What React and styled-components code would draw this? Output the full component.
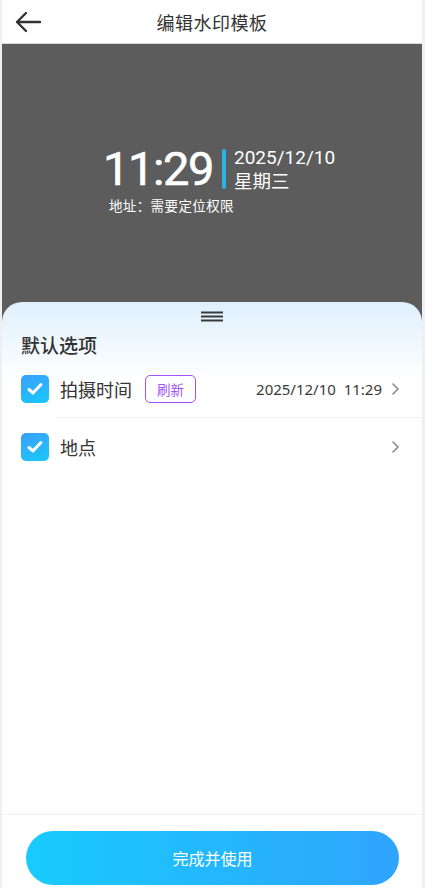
import React from "react";
import styled, { createGlobalStyle } from "styled-components";

const Global = createGlobalStyle`
  html, body { margin: 0; padding: 0; background: #efefef; }
  body { font-family: "Noto Sans CJK SC", "Noto Sans", sans-serif; }
  * { box-sizing: border-box; }
`;

const Frame = styled.div`
  width: 420px;
  height: 888px;
  margin-left: 2px;
  background: #ffffff;
  display: flex;
  flex-direction: column;
  overflow: hidden;
`;

const Header = styled.header`
  height: 44px;
  flex: none;
  display: flex;
  align-items: center;
  justify-content: center;
  position: relative;
  border-bottom: 1px solid #d8d8d8;
  background: #fff;
`;

const BackBtn = styled.button`
  position: absolute;
  left: 10px;
  top: 8px;
  width: 32px;
  height: 28px;
  padding: 0;
  border: 0;
  background: transparent;
  display: flex;
  align-items: center;
  justify-content: center;
`;

const Title = styled.h1`
  margin: 0;
  font-size: 18px;
  font-weight: 400;
  color: #333;
  letter-spacing: 0.5px;
`;

const Preview = styled.div`
  height: 278px;
  flex: none;
  background: #5c5c5c;
  display: flex;
  justify-content: center;
  padding-top: 102px;
  padding-left: 14px;
`;

const Watermark = styled.div`
  display: flex;
  flex-direction: column;
  color: #fff;
`;

const WmTop = styled.div`
  display: flex;
  align-items: center;
`;

const BigTime = styled.div`
  font-family: Roboto, sans-serif;
  font-size: 47px;
  font-weight: 400;
  line-height: 40px;
  letter-spacing: -1.4px;
  -webkit-text-stroke: 0.6px #fff;
`;

const Bar = styled.div`
  width: 4px;
  height: 40px;
  border-radius: 2px;
  background: #2ab4e6;
  margin: 0 8px 0 9px;
`;

const DateCol = styled.div`
  display: flex;
  flex-direction: column;
  font-size: 18.5px;
`;

const DateLine = styled.div`
  font-family: ${(p) => (p.$latin ? "Roboto, sans-serif" : "inherit")};
  font-size: ${(p) => (p.$latin ? "19px" : "18.5px")};
  line-height: 23px;
  height: 23px;
`;

const Address = styled.div`
  font-size: 13.5px;
  margin-top: 5px;
  margin-left: 6px;
  letter-spacing: 0.4px;
  line-height: 16px;
`;

const Sheet = styled.div`
  flex: 1;
  margin-top: -20px;
  border-radius: 20px 20px 0 0;
  background: linear-gradient(180deg, #dff0fd 0px, #ffffff 80px);
  display: flex;
  flex-direction: column;
`;

const Grip = styled.div`
  display: flex;
  justify-content: center;
  padding-top: 9px;
  height: 22px;
`;

const SectionTitle = styled.div`
  font-size: 19px;
  font-weight: 500;
  color: #333;
  padding: 7px 0 0 19px;
  line-height: 28px;
`;

const RowWrap = styled.div`
  border-bottom: ${(p) => (p.$divider ? "1px solid #eeeeee" : "none")};
  margin-left: 54px;
  margin-top: ${(p) => p.$mt || 0}px;
`;

const RowInner = styled.div`
  margin-left: -54px;
  display: flex;
  align-items: center;
  height: ${(p) => p.$h}px;
  padding: 0 22px 0 19px;
`;

const Check = styled.div`
  width: 28px;
  height: 28px;
  border-radius: 5px;
  background: linear-gradient(160deg, #3aa0fb, #19c8fc);
  display: flex;
  align-items: center;
  justify-content: center;
  flex: none;
`;

const Label = styled.div`
  font-size: 18px;
  color: #333;
  margin-left: 11px;
`;

const Badge = styled.div`
  margin-left: 13px;
  height: 28px;
  padding: 0 11px;
  border: 1.5px solid #a052f5;
  border-radius: 5px;
  color: #a052f5;
  font-size: 13.5px;
  display: flex;
  align-items: center;
`;

const Value = styled.div`
  margin-left: auto;
  font-family: "Noto Sans", sans-serif;
  font-size: 15px;
  color: #3a3a3a;
  white-space: pre;
`;

const Chevron = styled.div`
  margin-left: ${(p) => (p.$auto ? "auto" : "9px")};
  display: flex;
  align-items: center;
`;

const Spacer = styled.div`
  flex: 1;
`;

const Footer = styled.div`
  flex: none;
  height: 74px;
  border-top: 1px solid #f3f3f3;
  box-shadow: 0 -2px 4px rgba(0,0,0,0.015);
  display: flex;
  justify-content: center;
  padding-top: 16px;
`;

const PrimaryBtn = styled.button`
  width: 373px;
  height: 54px;
  border: 0;
  border-radius: 27px;
  background: linear-gradient(90deg, #18cbfd 0%, #2fa4fd 100%);
  color: #fff;
  font-family: "Noto Sans CJK SC", sans-serif;
  font-size: 16px;
  margin-left: 1px;
`;

const CheckIcon = () => (
  <svg width="20" height="20" viewBox="0 0 20 20">
    <path d="M4 10.5 L8 14 L16 5.5" fill="none" stroke="#fff" strokeWidth="3" strokeLinecap="round" strokeLinejoin="round" />
  </svg>
);

const ChevronIcon = () => (
  <svg width="9" height="14" viewBox="0 0 9 14">
    <path d="M2 2 L7 7 L2 12" fill="none" stroke="#888" strokeWidth="1.6" strokeLinecap="round" strokeLinejoin="round" />
  </svg>
);

export default function App() {
  return (
    <>
      <Global />
      <Frame>
        <Header>
          <BackBtn aria-label="back">
            <svg width="28" height="22" viewBox="0 0 28 22">
              <path d="M26 11 H3 M12 2 L3 11 L12 20" fill="none" stroke="#333" strokeWidth="2.4" strokeLinecap="round" strokeLinejoin="round" />
            </svg>
          </BackBtn>
          <Title>编辑水印模板</Title>
        </Header>
        <Preview>
          <Watermark>
            <WmTop>
              <BigTime>11:29</BigTime>
              <Bar />
              <DateCol>
                <DateLine $latin>2025/12/10</DateLine>
                <DateLine>星期三</DateLine>
              </DateCol>
            </WmTop>
            <Address>地址：需要定位权限</Address>
          </Watermark>
        </Preview>
        <Sheet>
          <Grip>
            <svg width="24" height="12" viewBox="0 0 24 12">
              <path d="M1 1.5 H23 M1 5.5 H23 M1 9.5 H23" stroke="#3a3a3a" strokeWidth="1.8" />
            </svg>
          </Grip>
          <SectionTitle>默认选项</SectionTitle>
          <RowWrap $divider $mt={2}>
            <RowInner $h={56}>
              <Check><CheckIcon /></Check>
              <Label>拍摄时间</Label>
              <Badge>刷新</Badge>
              <Value>2025/12/10  11:29</Value>
              <Chevron><ChevronIcon /></Chevron>
            </RowInner>
          </RowWrap>
          <RowWrap>
            <RowInner $h={57}>
              <Check><CheckIcon /></Check>
              <Label>地点</Label>
              <Chevron $auto><ChevronIcon /></Chevron>
            </RowInner>
          </RowWrap>
          <Spacer />
          <Footer>
            <PrimaryBtn>完成并使用</PrimaryBtn>
          </Footer>
        </Sheet>
      </Frame>
    </>
  );
}
